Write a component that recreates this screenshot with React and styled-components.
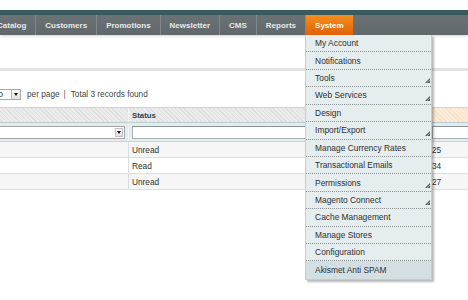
import React from "react";
import styled, { createGlobalStyle, css } from "styled-components";

const Global = createGlobalStyle`
  html, body { margin: 0; padding: 0; background: #fff; }
  body { font-family: "Liberation Sans", Arial, sans-serif; }
  #root { width: 468px; height: 300px; overflow: hidden; }
`;

const Page = styled.div`
  width: 468px;
  height: 300px;
  overflow: hidden;
  background: #fff;
  font-family: "Liberation Sans", Arial, sans-serif;
`;

const TopStrip = styled.div`
  height: 10px;
  background: #fff;
`;

const Band = styled.div`
  height: 5px;
  background: #3b5a60;
`;

const NavBar = styled.nav`
  height: 20px;
  background: linear-gradient(#6a7276, #60686c);
  box-shadow: 0 1px 3px rgba(0, 0, 0, 0.18);
  position: relative;
  z-index: 2;
`;

const NavList = styled.ul`
  list-style: none;
  margin: 0 0 0 -12px;
  padding: 0;
  display: flex;
  height: 100%;
`;

const NavItem = styled.li`
  position: relative;
  display: flex;
  align-items: center;
  height: 100%;
  box-sizing: border-box;
  padding: 0 9px;
  border-right: 1px solid #80888c;
  font: bold 8px "Liberation Sans", Arial, sans-serif;
  color: #e6e9ea;
  white-space: nowrap;
  ${(p) =>
    p.$active &&
    css`
      background: linear-gradient(#f4901e, #df6108);
      color: #fff;
      border-right: none;
    `}
`;

const Dropdown = styled.ul`
  position: absolute;
  top: 100%;
  left: -1px;
  width: 127px;
  margin: 0;
  padding: 0;
  list-style: none;
  box-sizing: border-box;
  background: #e5edef;
  border: 1px solid #c3cdd0;
  border-top: none;
  box-shadow: 2px 2px 2px rgba(0, 0, 0, 0.28);
`;

const DropItem = styled.li`
  height: 17.43px;
  box-sizing: border-box;
  display: flex;
  align-items: center;
  justify-content: space-between;
  padding: 0 1px 0 9px;
  border-bottom: 1px dotted #8c9294;
  font: normal 8.4px "Liberation Sans", Arial, sans-serif;
  color: #2f2f2f;
  background: ${(p) => (p.$highlight ? "#d3dfe2" : "transparent")};
  &:last-child {
    border-bottom: none;
  }
`;

const Grip = styled.svg`
  align-self: flex-end;
  margin-bottom: 3px;
  flex: none;
`;

const ContentHeader = styled.div`
  height: 33px;
  border-bottom: 3px solid #e3e3e3;
`;

const Pager = styled.div`
  display: flex;
  align-items: center;
  height: 16px;
  margin-top: 15px;
  margin-left: -9px;
  font-size: 8.25px;
  color: #444;
  white-space: nowrap;
`;

const PerPageSelect = styled.div`
  width: 30px;
  height: 11px;
  box-sizing: border-box;
  border: 1px solid #a9a9a9;
  background: #fff;
  display: flex;
  align-items: center;
  justify-content: space-between;
  padding-left: 2px;
  font-size: 8px;
  color: #222;
`;

const SelectButton = styled.div`
  width: 9px;
  height: 100%;
  box-sizing: border-box;
  border-left: 1px solid #b5b5b5;
  background: linear-gradient(#f7f7f7, #e2e2e2);
  display: flex;
  align-items: center;
  justify-content: center;
  &::after {
    content: "";
    border-left: 2.5px solid transparent;
    border-right: 2.5px solid transparent;
    border-top: 3px solid #111;
  }
`;

const PerPageLabel = styled.span`
  margin-left: 6px;
`;

const Divider = styled.span`
  margin: 0 5px 0 4px;
  color: #666;
`;

const Grid = styled.div`
  margin-top: 5px;
  margin-left: -100px;
  width: 660px;
`;

const Row = styled.div`
  display: grid;
  grid-template-columns: 229px 300px 131px;
  box-sizing: border-box;
`;

const HeaderRow = styled(Row)`
  height: 16px;
  border-top: 1px solid #d3d3d3;
  border-bottom: 1px solid #bccdd2;
`;

const HeaderCell = styled.div`
  display: flex;
  align-items: center;
  padding-left: 3px;
  border-right: 1px solid #f6f6f6;
  font: bold 7.8px "Liberation Sans", Arial, sans-serif;
  color: #2d444f;
  background: ${(p) =>
    p.$sorted
      ? "repeating-linear-gradient(45deg, #fbe1c8 0 1px, #fdebd9 1px 3px)"
      : "repeating-linear-gradient(45deg, #e0e0e0 0 1px, #ebebeb 1px 3px)"};
`;

const FilterRow = styled(Row)`
  height: 19px;
  background: #e3ecef;
  border-bottom: 1px solid #c7d5d9;
`;

const FilterCell = styled.div`
  display: flex;
  align-items: center;
  padding: 0 3px;
  border-right: 1px solid #f3f7f8;
`;

const FilterSelect = styled.div`
  flex: 1;
  height: 13px;
  box-sizing: border-box;
  border: 1px solid #a6a6a6;
  background: #fff;
  display: flex;
  justify-content: flex-end;
  padding: 1px;
`;

const FilterSelectButton = styled(SelectButton)`
  width: 8px;
  border: 1px solid #c2c2c2;
`;

const FilterInput = styled.div`
  flex: 1;
  height: 13px;
  margin-top: 1px;
  box-sizing: border-box;
  border: 1px solid #aab3b6;
  border-top-color: #8a9396;
  background: #fff;
`;

const DataRow = styled(Row)`
  height: 16px;
  border-bottom: 1px solid #dadfe0;
  background: ${(p) => (p.$odd ? "#f6f6f6" : "#fff")};
`;

const DataCell = styled.div`
  display: flex;
  align-items: center;
  padding-left: 3px;
  border-right: 1px solid #dadfe0;
  font: 8.3px "Liberation Sans", Arial, sans-serif;
  color: #303030;
  white-space: nowrap;
  overflow: hidden;
`;

const navItems = ["Catalog", "Customers", "Promotions", "Newsletter", "CMS", "Reports"];

const systemMenu = [
  { label: "My Account" },
  { label: "Notifications" },
  { label: "Tools", sub: true },
  { label: "Web Services", sub: true },
  { label: "Design" },
  { label: "Import/Export", sub: true },
  { label: "Manage Currency Rates" },
  { label: "Transactional Emails" },
  { label: "Permissions", sub: true },
  { label: "Magento Connect", sub: true },
  { label: "Cache Management" },
  { label: "Manage Stores" },
  { label: "Configuration" },
  { label: "Akismet Anti SPAM", highlight: true },
];

const rows = [
  { status: "Unread", time: "25" },
  { status: "Read", time: "34" },
  { status: "Unread", time: "27" },
];

function GripIcon() {
  return (
    <Grip width="5" height="5" viewBox="0 0 5 5">
      <polygon points="5,0 5,5 0,5" fill="#5a5f61" />
      <line x1="5" y1="2" x2="2" y2="5" stroke="#c9d2d5" strokeWidth="0.6" />
    </Grip>
  );
}

export default function App() {
  return (
    <Page>
      <Global />
      <TopStrip />
      <Band />
      <NavBar>
        <NavList>
          {navItems.map((n) => (
            <NavItem key={n}>{n}</NavItem>
          ))}
          <NavItem $active>
            System
            <Dropdown>
              {systemMenu.map((m) => (
                <DropItem key={m.label} $highlight={m.highlight}>
                  <span>{m.label}</span>
                  {m.sub && <GripIcon />}
                </DropItem>
              ))}
            </Dropdown>
          </NavItem>
        </NavList>
      </NavBar>
      <ContentHeader />
      <Pager>
        <PerPageSelect>
          <span>20</span>
          <SelectButton />
        </PerPageSelect>
        <PerPageLabel>per page</PerPageLabel>
        <Divider>|</Divider>
        <span>Total 3 records found</span>
      </Pager>
      <Grid>
        <HeaderRow>
          <HeaderCell />
          <HeaderCell>Status</HeaderCell>
          <HeaderCell $sorted />
        </HeaderRow>
        <FilterRow>
          <FilterCell>
            <FilterSelect>
              <FilterSelectButton />
            </FilterSelect>
          </FilterCell>
          <FilterCell>
            <FilterInput />
          </FilterCell>
          <FilterCell>
            <FilterInput />
          </FilterCell>
        </FilterRow>
        {rows.map((r, i) => (
          <DataRow key={i} $odd={i % 2 === 0}>
            <DataCell />
            <DataCell>{r.status}</DataCell>
            <DataCell>{r.time}</DataCell>
          </DataRow>
        ))}
      </Grid>
    </Page>
  );
}
